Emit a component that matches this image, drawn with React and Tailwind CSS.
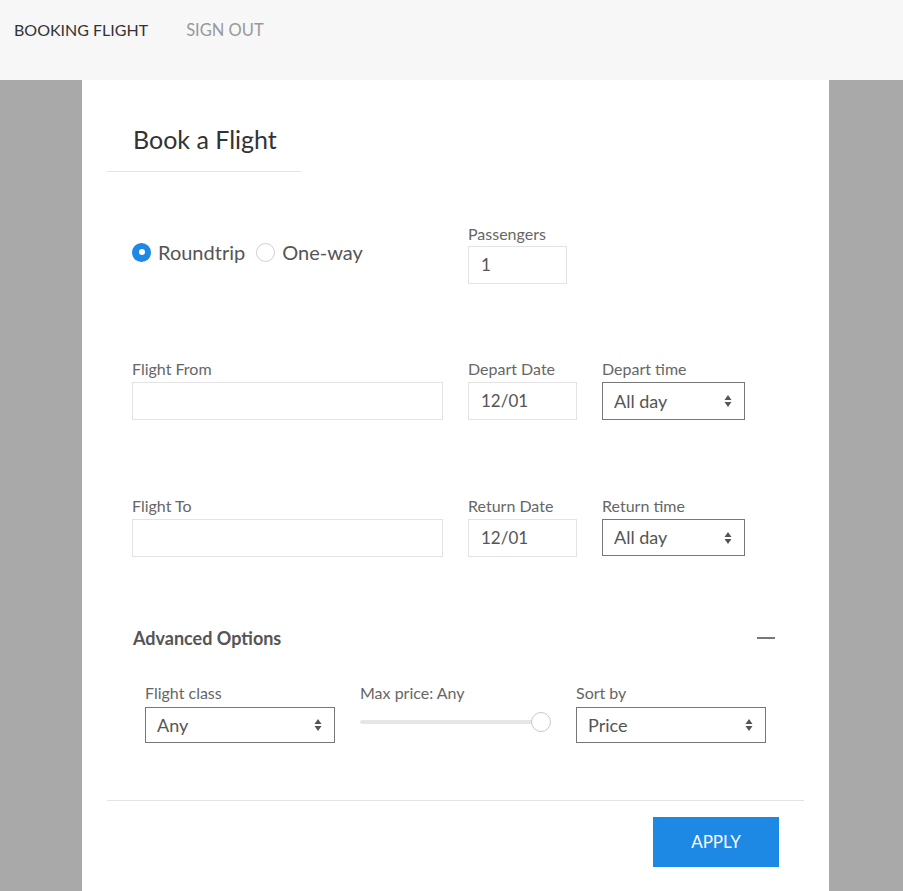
import { useState } from 'react'

const FONT = { fontFamily: '"Lato", "Noto Sans", sans-serif' }

function Arrows() {
  return (
    <svg width="8" height="14" viewBox="0 0 8 14" className="shrink-0" aria-hidden="true">
      <path d="M4 1 L7.5 6 L0.5 6 Z" fill="#555" />
      <path d="M4 13 L7.5 8 L0.5 8 Z" fill="#555" />
    </svg>
  )
}

function Label({ children }) {
  return <div className="h-[20px] text-[16px] leading-[20px] text-[#666]">{children}</div>
}

function TextBox({ value, className }) {
  return (
    <div
      className={`flex h-[38px] items-center border border-[#e3e3e3] px-[12px] text-[17px] text-[#555] ${className}`}
    >
      {value}
    </div>
  )
}

function Select({ value, className }) {
  return (
    <div
      className={`flex items-center justify-between border border-[#777] pl-[11px] pr-[12px] text-[18px] text-[#555] ${className}`}
    >
      <span>{value}</span>
      <Arrows />
    </div>
  )
}

function Radio({ checked, label, onClick }) {
  return (
    <button type="button" onClick={onClick} className="flex items-center gap-[7px]">
      {checked ? (
        <span className="flex h-[19px] w-[19px] items-center justify-center rounded-full bg-[#1e88e5]">
          <span className="h-[6px] w-[6px] rounded-full bg-white" />
        </span>
      ) : (
        <span className="h-[19px] w-[19px] rounded-full border border-[#cfcfcf] bg-white" />
      )}
      <span className="text-[20px] leading-[24px] text-[#555]">{label}</span>
    </button>
  )
}

export default function App() {
  const [trip, setTrip] = useState('round')

  return (
    <div className="min-h-[891px] bg-[#a9a9a9]" style={FONT}>
      {/* top bar */}
      <div className="flex h-[80px] items-start gap-[38px] bg-[#f7f7f7] pl-[14px] pt-[19px] text-[16px] leading-[22px]">
        <span className="text-[#333]">BOOKING FLIGHT</span>
        <span className="text-[16.5px] text-[#999]">SIGN OUT</span>
      </div>

      <div className="ml-[82px] min-h-[811px] w-[747px] bg-white px-[25px]">
        <div className="w-[194px] border-b border-[#e3e3e3] pb-[17px] pl-[26px] pt-[44px] text-[25px] leading-[30px] text-[#333]">
          Book a Flight
        </div>

        <div className="px-[25px]">
          {/* trip type + passengers */}
          <div className="mt-[52px] flex items-start">
            <div className="flex w-[336px] items-center gap-[11px] pt-[16px]">
              <Radio checked={trip === 'round'} label="Roundtrip" onClick={() => setTrip('round')} />
              <Radio checked={trip === 'one'} label="One-way" onClick={() => setTrip('one')} />
            </div>
            <div className="flex flex-col gap-[2px]">
              <Label>Passengers</Label>
              <TextBox value="1" className="w-[99px]" />
            </div>
          </div>

          {/* from */}
          <div className="mt-[75px] flex gap-[25px]">
            <div className="flex flex-col gap-[3px]">
              <Label>Flight From</Label>
              <TextBox value="" className="w-[311px]" />
            </div>
            <div className="flex flex-col gap-[3px]">
              <Label>Depart Date</Label>
              <TextBox value="12/01" className="w-[109px]" />
            </div>
            <div className="flex flex-col gap-[3px]">
              <Label>Depart time</Label>
              <Select value="All day" className="h-[38px] w-[143px]" />
            </div>
          </div>

          {/* to */}
          <div className="mt-[76px] flex gap-[25px]">
            <div className="flex flex-col gap-[3px]">
              <Label>Flight To</Label>
              <TextBox value="" className="w-[311px]" />
            </div>
            <div className="flex flex-col gap-[3px]">
              <Label>Return Date</Label>
              <TextBox value="12/01" className="w-[109px]" />
            </div>
            <div className="flex flex-col gap-[3px]">
              <Label>Return time</Label>
              <Select value="All day" className="h-[37px] w-[143px]" />
            </div>
          </div>

          {/* advanced */}
          <div className="mt-[69px] flex items-center justify-between pr-[4px]">
            <span className="pl-[1px] text-[18px] font-bold leading-[24px] text-[#555]">Advanced Options</span>
            <span className="h-[2px] w-[18px] bg-[#777]" />
          </div>

          <div className="mt-[33px] flex pl-[13px]">
            <div className="flex flex-col gap-[4px]">
              <Label>Flight class</Label>
              <Select value="Any" className="h-[36px] w-[190px]" />
            </div>
            <div className="ml-[25px] flex w-[191px] flex-col">
              <Label>Max price: Any</Label>
              <div className="relative mt-[9px] h-[20px]">
                <div className="absolute left-0 right-[10px] top-[8px] h-[4px] rounded-full bg-[#e6e6e6]" />
                <div className="absolute right-0 top-0 h-[20px] w-[20px] rounded-full border border-[#c8c8c8] bg-white" />
              </div>
            </div>
            <div className="ml-[25px] flex flex-col gap-[4px]">
              <Label>Sort by</Label>
              <Select value="Price" className="h-[36px] w-[190px]" />
            </div>
          </div>
        </div>

        <div className="mt-[57px] border-t border-[#e3e3e3]" />
        <div className="flex justify-end pr-[25px] pt-[16px]">
          <button
            type="button"
            className="h-[50px] w-[126px] bg-[#1e88e5] text-[17px] text-white"
          >
            APPLY
          </button>
        </div>
      </div>
    </div>
  )
}
